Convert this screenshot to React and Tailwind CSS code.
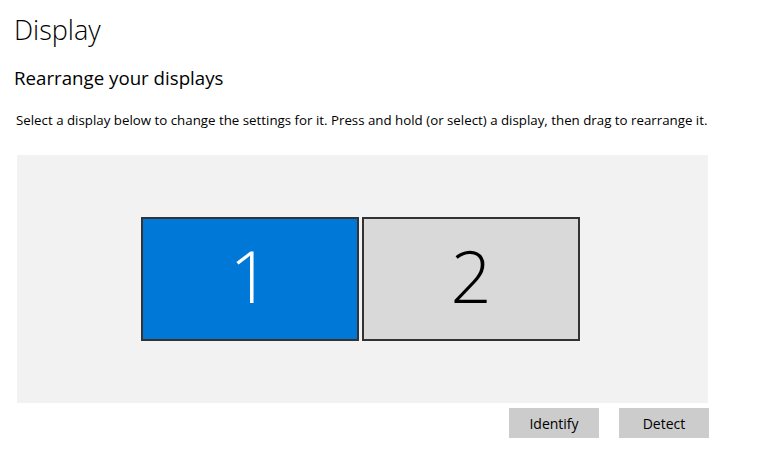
const Monitor = ({ num, active }) => (
  <div
    className={
      active
        ? "w-[218px] h-[124px] border-2 border-[#333333] bg-[#0078d7] text-white flex items-center justify-center"
        : "w-[218px] h-[124px] border-2 border-[#333333] bg-[#d9d9d9] text-black flex items-center justify-center"
    }
  >
    <span className="text-[72px] font-light leading-none pb-[8px]">{num}</span>
  </div>
);

export default function App() {
  return (
    <div
      className="w-[769px] h-[468px] bg-white text-black overflow-hidden"
      style={{ fontFamily: '"Open Sans", "Noto Sans", sans-serif' }}
    >
      <h1 className="pl-[14px] pt-[12px] text-[27px] font-light leading-[36px]">
        Display
      </h1>
      <h2 className="pl-[14px] mt-[17px] text-[18.7px] leading-[26px]">
        Rearrange your displays
      </h2>
      <p className="pl-[16px] mt-[20px] text-[13.3px] leading-[18px] whitespace-nowrap">
        Select a display below to change the settings for it. Press and hold
        (or select) a display, then drag to rearrange it.
      </p>
      <div className="ml-[17px] mt-[26px] w-[691px] h-[248px] bg-[#f2f2f2] flex items-start pl-[124px] pt-[62px] gap-[3px]">
        <Monitor num="1" active />
        <Monitor num="2" />
      </div>
      <div className="flex justify-end gap-[20px] w-[709px] mt-[5px]">
        <button className="w-[90px] h-[30px] bg-[#cccccc] text-[14px]">
          Identify
        </button>
        <button className="w-[90px] h-[30px] bg-[#cccccc] text-[14px]">
          Detect
        </button>
      </div>
    </div>
  );
}
